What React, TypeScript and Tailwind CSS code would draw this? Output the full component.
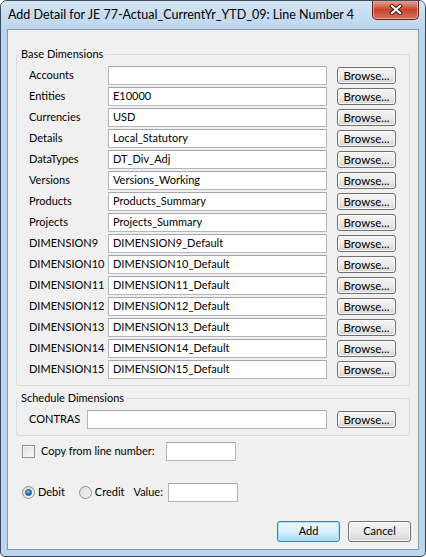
import React from "react";

const baseRows: [string, string][] = [
  ["Accounts", ""],
  ["Entities", "E10000"],
  ["Currencies", "USD"],
  ["Details", "Local_Statutory"],
  ["DataTypes", "DT_Div_Adj"],
  ["Versions", "Versions_Working"],
  ["Products", "Products_Summary"],
  ["Projects", "Projects_Summary"],
  ["DIMENSION9", "DIMENSION9_Default"],
  ["DIMENSION10", "DIMENSION10_Default"],
  ["DIMENSION11", "DIMENSION11_Default"],
  ["DIMENSION12", "DIMENSION12_Default"],
  ["DIMENSION13", "DIMENSION13_Default"],
  ["DIMENSION14", "DIMENSION14_Default"],
  ["DIMENSION15", "DIMENSION15_Default"],
];

function TextBox({ value, className }: { value?: string; className: string }) {
  return (
    <div
      className={
        "h-[19px] flex items-center pl-[4px] bg-white border border-[#b3b6bd] border-t-[#a3a6ad] whitespace-nowrap overflow-hidden " +
        className
      }
    >
      {value}
    </div>
  );
}

function Browse() {
  return (
    <div className="ml-[10px] w-[59px] h-[17px] flex items-center justify-center rounded-[3px] border border-[#707070] bg-gradient-to-b from-[#f4f4f4] via-[#ebebeb] to-[#d6d6d6] shadow-[inset_0_0_0_1px_#fbfbfb] leading-none text-[11.5px]">
      Browse...
    </div>
  );
}

function Radio({ checked }: { checked?: boolean }) {
  return (
    <div className="w-[13px] h-[13px] rounded-full border border-[#8e9399] bg-gradient-to-br from-[#d8dadc] to-[#f7f7f7] flex items-center justify-center">
      {checked && (
        <div className="w-[7px] h-[7px] rounded-full bg-[radial-gradient(circle_at_40%_35%,#9fd6ff_0%,#2a7fd0_45%,#0b3f7a_100%)] border border-[#1c4f8a]" />
      )}
    </div>
  );
}

export default function App() {
  return (
    <div className="w-[426px] h-[557px] flex flex-col bg-[#bcd5ee] border border-[#3b4a5a] rounded-t-[7px] rounded-b-[5px] overflow-hidden font-['Lato',sans-serif] text-[11px] text-black">
      {/* Title bar */}
      <div className="h-[28px] flex items-start bg-gradient-to-b from-[#d3e4f5] to-[#bcd5ee]">
        <div className="flex-1 pl-[7px] pt-[6px] leading-[16px] whitespace-nowrap text-[12.5px] text-[#000]">
          Add Detail for JE 77-Actual_CurrentYr_YTD_09: Line Number 4
        </div>
        <div className="mr-[6px] -mt-[1px] w-[47px] h-[20px] rounded-b-[5px] border border-[#5b2119] border-t-0 bg-gradient-to-b from-[#e9a99a] via-[#c8442f] to-[#d4705a] flex items-center justify-center shadow-[inset_0_0_0_1px_rgba(255,200,190,0.6)]">
          <svg width="14" height="11" viewBox="0 0 14 11">
            <path d="M3 2 L11 9 M11 2 L3 9" stroke="#3a1410" strokeWidth="4" strokeLinecap="square" />
            <path d="M3 2 L11 9 M11 2 L3 9" stroke="#ffffff" strokeWidth="2.2" strokeLinecap="square" />
          </svg>
        </div>
      </div>

      {/* Client area */}
      <div className="mx-[6px] w-[412px] h-[521px] border border-[#8597ab] bg-[#f0f0f0] flex flex-col px-[8px]">
        {/* Base Dimensions */}
        <fieldset className="mt-[16px] border border-[#d5dde3] rounded-[3px]">
          <legend className="ml-[2px] px-[2px] leading-[16px]">Base Dimensions</legend>
          <div className="pl-[12px] pt-[3px] pb-[5px] flex flex-col">
            {baseRows.map(([label, value]) => (
              <div key={label} className="h-[21px] flex items-center">
                <div className="w-[79px] whitespace-nowrap">{label}</div>
                <TextBox value={value} className="w-[219px]" />
                <Browse />
              </div>
            ))}
          </div>
        </fieldset>

        {/* Schedule Dimensions */}
        <fieldset className="mt-[4px] border border-[#d5dde3] rounded-[3px]">
          <legend className="ml-[2px] px-[2px] leading-[16px]">Schedule Dimensions</legend>
          <div className="pl-[12px] pt-[3px] pb-[5px]">
            <div className="h-[21px] flex items-center">
              <div className="w-[58px] whitespace-nowrap">CONTRAS</div>
              <TextBox className="w-[240px]" />
              <Browse />
            </div>
          </div>
        </fieldset>

        {/* Copy from line number */}
        <div className="mt-[6px] ml-[6px] h-[19px] flex items-center">
          <div className="w-[13px] h-[13px] border border-[#8e8f8f] bg-gradient-to-br from-[#dcdcdc] to-[#fbfbfb] shadow-[inset_0_0_0_1px_#f4f4f4]" />
          <div className="ml-[6px] whitespace-nowrap">Copy from line number:</div>
          <TextBox className="ml-[11px] w-[70px]" />
        </div>

        {/* Debit / Credit */}
        <div className="mt-[22px] ml-[6px] h-[19px] flex items-center">
          <Radio checked />
          <div className="ml-[3px]">Debit</div>
          <div className="ml-[14px]">
            <Radio />
          </div>
          <div className="ml-[3px]">Credit</div>
          <div className="ml-[9px]">Value:</div>
          <TextBox className="ml-[5px] w-[70px]" />
        </div>

        {/* Buttons */}
        <div className="mt-auto mb-[7px] -mr-[1px] flex justify-end gap-[8px]">
          <div className="w-[63px] h-[21px] flex items-center justify-center rounded-[3px] border border-[#3c7fb1] bg-gradient-to-b from-[#eaf6fd] via-[#d9f0fc] to-[#a7d9f5] shadow-[inset_0_0_0_1px_#a6e2fa]">
            Add
          </div>
          <div className="w-[63px] h-[21px] flex items-center justify-center rounded-[3px] border border-[#707070] bg-gradient-to-b from-[#f2f2f2] via-[#ebebeb] to-[#d5d5d5] shadow-[inset_0_0_0_1px_#fcfcfc]">
            Cancel
          </div>
        </div>
      </div>
    </div>
  );
}
